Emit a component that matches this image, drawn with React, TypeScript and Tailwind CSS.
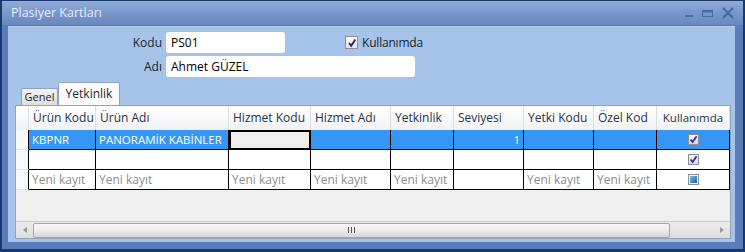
import React from 'react';

const FONT = { fontFamily: '"Open Sans", "Noto Sans", sans-serif' };

const COLS = [
  { title: 'Ürün Kodu', w: 67 },
  { title: 'Ürün Adı', w: 133 },
  { title: 'Hizmet Kodu', w: 82 },
  { title: 'Hizmet Adı', w: 80 },
  { title: 'Yetkinlik', w: 63 },
  { title: 'Seviyesi', w: 70 },
  { title: 'Yetki Kodu', w: 70 },
  { title: 'Özel Kod', w: 63 },
  { title: 'Kullanımda', w: 73, center: true },
];

// last column is the checkbox state
const ROWS: { cells: string[]; check: 'on' | 'mixed'; selected?: boolean; placeholder?: boolean }[] = [
  { cells: ['KBPNR', 'PANORAMİK KABİNLER', '', '', '', '1', '', ''], check: 'on', selected: true },
  { cells: ['', '', '', '', '', '', '', ''], check: 'on' },
  {
    cells: ['Yeni kayıt', 'Yeni kayıt', 'Yeni kayıt', 'Yeni kayıt', 'Yeni kayıt', '', 'Yeni kayıt', 'Yeni kayıt'],
    check: 'mixed',
    placeholder: true,
  },
];

function GridCheck({ state }: { state: 'on' | 'mixed' }) {
  if (state === 'mixed') {
    return (
      <div className="flex h-[11px] w-[11px] items-center justify-center border border-[#8a8f96] bg-[#f4f4f4]">
        <div className="h-[7px] w-[7px] bg-gradient-to-br from-[#7cc0ee] to-[#1c5f9f]" />
      </div>
    );
  }
  return (
    <div className="flex h-[11px] w-[11px] items-center justify-center border border-[#8a8f96] bg-gradient-to-b from-[#f6f6f6] to-[#d8d8de]">
      <svg width="9" height="9" viewBox="0 0 9 9">
        <path d="M1.5 4.5 L3.6 7 L7.6 1.2" fill="none" stroke="#3b2c9c" strokeWidth="1.8" />
      </svg>
    </div>
  );
}

function TitleButtons() {
  return (
    <div className="flex items-center gap-[9px] pr-[9px] text-[#4a6ca3]">
      <svg width="8" height="14" viewBox="0 0 8 14">
        <rect x="0" y="9" width="8" height="2" fill="currentColor" />
      </svg>
      <svg width="11" height="14" viewBox="0 0 11 14">
        <rect x="0.5" y="4.5" width="10" height="6" fill="none" stroke="currentColor" />
        <rect x="0" y="4" width="11" height="2.5" fill="currentColor" />
      </svg>
      <svg width="12" height="14" viewBox="0 0 12 14">
        <path d="M1 2 L11 12 M11 2 L1 12" stroke="currentColor" strokeWidth="2.2" />
      </svg>
    </div>
  );
}

export default function App() {
  return (
    <div className="h-[252px] w-[745px] bg-[#1b386c] px-[2px] pt-[1px] pb-[3px]" style={FONT}>
      <div className="flex h-full flex-col bg-[#5a7db8]">
        {/* title bar */}
        <div className="flex h-[24px] items-center justify-between bg-gradient-to-b from-[#90acd8] via-[#7897ca] to-[#6889c0]">
          <span className="pl-[9px] text-[12.5px] text-[#e4ecf7]">Plasiyer Kartları</span>
          <TitleButtons />
        </div>

        <div className="mt-[1px] mb-[7px] ml-[6px] mr-[8px] flex flex-1 flex-col border-t border-[#b8cdea] bg-[#a6c4ea] pt-[5px]">
          {/* form */}
          <div className="flex h-[21px] items-center">
            <span className="w-[154px] text-right text-[12px] text-[#1a1f2a]">Kodu</span>
            <div className="ml-[4px] flex h-[21px] w-[119px] items-center rounded-[3px] bg-white pl-[5px] text-[12px] text-black">PS01</div>
            <div className="ml-[60px] flex items-center gap-[4px]">
              <div className="flex h-[13px] w-[13px] items-center justify-center border border-[#8e8f94] bg-gradient-to-b from-[#ffffff] to-[#e2e2e8]">
                <svg width="10" height="10" viewBox="0 0 10 10">
                  <path d="M2 5 L4.2 7.8 L8.3 1.5" fill="none" stroke="#28267a" strokeWidth="1.9" />
                </svg>
              </div>
              <span className="text-[12px] tracking-[-0.2px] text-[#1a1f2a]">Kullanımda</span>
            </div>
          </div>
          <div className="mt-[3px] flex h-[21px] items-center">
            <span className="w-[154px] text-right text-[12px] text-[#1a1f2a]">Adı</span>
            <div className="ml-[4px] flex h-[21px] w-[249px] items-center rounded-[3px] bg-white pl-[5px] text-[12px] text-black">Ahmet GÜZEL</div>
          </div>

          {/* tabs */}
          <div className="mt-[5px] ml-[13px] flex h-[23px] items-end">
            <div className="flex h-[17px] w-[37px] items-center justify-center rounded-t-[2px] border border-b-0 border-[#8fa3bf] bg-gradient-to-b from-[#f3f3f3] to-[#dedede] text-[11px] text-[#1a1f2a]">
              Genel
            </div>
            <div className="flex h-[23px] w-[62px] items-center justify-center rounded-t-[2px] border border-b-0 border-[#8fa3bf] bg-[#fbfbfb] text-[12px] text-[#1a1f2a]">
              Yetkinlik
            </div>
          </div>

          {/* grid */}
          <div className="mb-[3px] ml-[7px] flex w-[716px] flex-1 flex-col border border-[#8fa3bf] bg-[#efefef] text-[12px]">
            <div className="flex h-[24px] bg-gradient-to-b from-white to-[#f1f2f4]">
              <div className="w-[13px] border-r border-[#dadde2]" />
              {COLS.map((c) => (
                <div
                  key={c.title}
                  className={`flex items-center whitespace-nowrap border-r border-[#dadde2] text-[#26344a] ${c.center ? 'justify-center text-[11.5px]' : 'pl-[4px]'}`}
                  style={{ width: c.w }}
                >
                  {c.title}
                </div>
              ))}
            </div>

            {ROWS.map((r, ri) => (
              <div key={ri} className={`flex h-[20px] ${r.selected ? 'bg-[#3596f6]' : 'bg-white'}`}>
                <div className="w-[13px] border-r border-b border-r-black border-b-[#dfe3ea] bg-[#f7f9fc]" />
                {r.cells.map((txt, ci) => {
                  const col = COLS[ci];
                  const focused = r.selected && ci === 2;
                  const right = ci === 5;
                  return (
                    <div
                      key={ci}
                      className={`flex items-center overflow-hidden whitespace-nowrap px-[3px] ${
                        focused ? 'border-2 border-black bg-[#efefef]' : 'border-r border-b border-black'
                      } ${r.selected ? 'text-[11.5px] text-white' : r.placeholder ? 'text-[#8c8c8c]' : 'text-black'} ${right ? 'justify-end' : ''}`}
                      style={{ width: col.w }}
                    >
                      {focused ? '' : txt}
                    </div>
                  );
                })}
                <div className="flex items-center justify-center border-r border-b border-black" style={{ width: COLS[8].w }}>
                  <GridCheck state={r.check} />
                </div>
              </div>
            ))}

            <div className="flex-1" />

            {/* horizontal scrollbar */}
            <div className="flex h-[17px] items-center border-t border-[#c3cad6] bg-gradient-to-b from-[#ececec] to-[#dedede]">
              <div className="flex w-[17px] items-center justify-center">
                <svg width="4" height="6" viewBox="0 0 4 6">
                  <path d="M4 0 L0 3 L4 6 Z" fill="#9a9a9a" />
                </svg>
              </div>
              <div className="flex h-[15px] w-[637px] items-center justify-center rounded-[2px] border border-[#a3a7ad] bg-gradient-to-b from-[#f7f7f7] via-[#ececec] to-[#d6d6d6]">
                <div className="flex gap-[2px]">
                  <div className="h-[6px] w-[1px] bg-[#555]" />
                  <div className="h-[6px] w-[1px] bg-[#555]" />
                  <div className="h-[6px] w-[1px] bg-[#555]" />
                </div>
              </div>
              <div className="flex-1" />
              <div className="flex w-[17px] items-center justify-center">
                <svg width="4" height="6" viewBox="0 0 4 6">
                  <path d="M0 0 L4 3 L0 6 Z" fill="#9a9a9a" />
                </svg>
              </div>
            </div>
          </div>
        </div>
      </div>
    </div>
  );
}
